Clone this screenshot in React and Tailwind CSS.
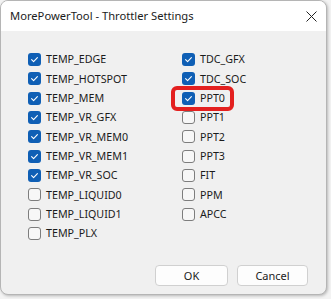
import React from "react";

const left = [
  ["TEMP_EDGE", true],
  ["TEMP_HOTSPOT", true],
  ["TEMP_MEM", true],
  ["TEMP_VR_GFX", true],
  ["TEMP_VR_MEM0", true],
  ["TEMP_VR_MEM1", true],
  ["TEMP_VR_SOC", true],
  ["TEMP_LIQUID0", false],
  ["TEMP_LIQUID1", false],
  ["TEMP_PLX", false],
];
const right = [
  ["TDC_GFX", true],
  ["TDC_SOC", true],
  ["PPT0", true],
  ["PPT1", false],
  ["PPT2", false],
  ["PPT3", false],
  ["FIT", false],
  ["PPM", false],
  ["APCC", false],
];

function Box({ checked }) {
  if (checked)
    return (
      <div className="w-[13px] h-[13px] rounded-[3px] bg-[#0f5fb5] flex items-center justify-center shrink-0">
        <svg width="9" height="9" viewBox="0 0 9 9" fill="none">
          <path d="M1.6 4.7 L3.6 6.6 L7.4 2.6" stroke="white" strokeWidth="1.1" strokeLinecap="round" strokeLinejoin="round" />
        </svg>
      </div>
    );
  return <div className="w-[13px] h-[13px] rounded-[3px] border border-[#7d7d7d] bg-[#f7f7f7] shrink-0" />;
}

function Item({ label, checked, highlight }) {
  return (
    <div className="relative h-[19.33px] flex items-center gap-[5px]">
      <Box checked={checked} />
      <span className="text-[10.7px] text-[#1b1b1b] leading-none">{label}</span>
      {highlight && (
        <div className="absolute left-[-11px] top-[-3px] w-[63px] h-[25px] border-[4px] border-[#e3201f] rounded-[6px]" />
      )}
    </div>
  );
}

export default function App() {
  return (
    <div className="w-[331px] h-[299px] bg-[#f3f3f3]" style={{ fontFamily: '"Noto Sans", "Open Sans", sans-serif' }}>
      <div className="w-[327px] h-[295px] rounded-[8px] border border-[#b5b5b5] bg-[#f0f0f0] overflow-hidden flex flex-col shadow-[1px_1px_3px_rgba(0,0,0,0.25)]">
        <div className="h-[30px] bg-white flex items-center justify-between pl-[9px] pr-[9px] shrink-0">
          <span className="text-[11.2px] text-[#1b1b1b]">MorePowerTool - Throttler Settings</span>
          <svg width="11" height="11" viewBox="0 0 11 11">
            <path d="M0.5 0.5 L10.5 10.5 M10.5 0.5 L0.5 10.5" stroke="#222" strokeWidth="1" />
          </svg>
        </div>
        <div className="flex pt-[19px] pl-[27px]">
          <div className="w-[154px] flex flex-col">
            {left.map(([l, c]) => (
              <Item key={l} label={l} checked={c} />
            ))}
          </div>
          <div className="flex flex-col">
            {right.map(([l, c]) => (
              <Item key={l} label={l} checked={c} highlight={l === "PPT0"} />
            ))}
          </div>
        </div>
        <div className="flex justify-end gap-[9px] pr-[18px] mt-auto mb-[8px]">
          <button className="w-[73px] h-[21px] rounded-[4px] border border-[#d0d0d0] bg-[#fdfdfd] text-[11px] text-[#1b1b1b] leading-none">OK</button>
          <button className="w-[71px] h-[21px] rounded-[4px] border border-[#d0d0d0] bg-[#fdfdfd] text-[11px] text-[#1b1b1b] leading-none">Cancel</button>
        </div>
      </div>
    </div>
  );
}
